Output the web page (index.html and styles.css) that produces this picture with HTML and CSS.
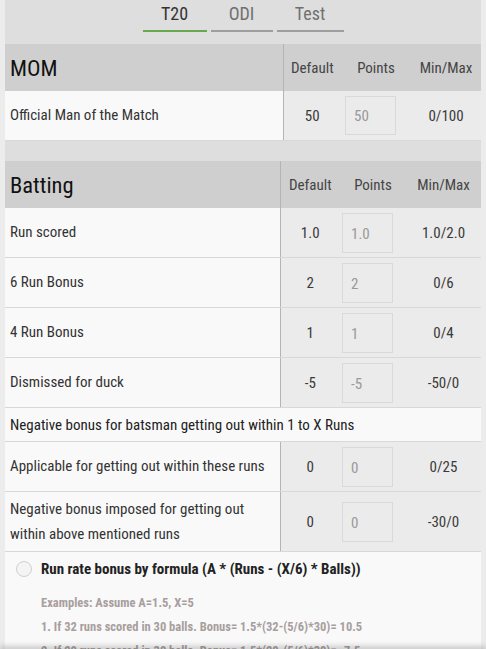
FILE: index.html
```html
<!DOCTYPE html>
<html>
<head>
<meta charset="utf-8">
<link rel="stylesheet" href="styles.css">
</head>
<body>
<div class="page">
  <nav class="tabs">
    <div class="tab tab-active tab-t20">T20</div>
    <div class="tab tab-odi">ODI</div>
    <div class="tab tab-test">Test</div>
  </nav>

  <table class="points mom">
    <colgroup>
      <col class="c1"><col class="c2"><col class="c3"><col class="c4">
    </colgroup>
    <thead>
      <tr class="head">
        <th class="title">MOM</th>
        <th>Default</th>
        <th>Points</th>
        <th>Min/Max</th>
      </tr>
    </thead>
    <tbody>
      <tr>
        <td class="label">Official Man of the Match</td>
        <td class="val">50</td>
        <td class="inp"><div class="box">50</div></td>
        <td class="val">0/100</td>
      </tr>
    </tbody>
  </table>

  <table class="points bat">
    <colgroup>
      <col class="c1"><col class="c2"><col class="c3"><col class="c4">
    </colgroup>
    <thead>
      <tr class="head">
        <th class="title">Batting</th>
        <th>Default</th>
        <th>Points</th>
        <th>Min/Max</th>
      </tr>
    </thead>
    <tbody>
      <tr>
        <td class="label">Run scored</td>
        <td class="val">1.0</td>
        <td class="inp"><div class="box">1.0</div></td>
        <td class="val">1.0/2.0</td>
      </tr>
      <tr>
        <td class="label">6 Run Bonus</td>
        <td class="val">2</td>
        <td class="inp"><div class="box">2</div></td>
        <td class="val">0/6</td>
      </tr>
      <tr>
        <td class="label">4 Run Bonus</td>
        <td class="val">1</td>
        <td class="inp"><div class="box">1</div></td>
        <td class="val">0/4</td>
      </tr>
      <tr>
        <td class="label">Dismissed for duck</td>
        <td class="val">-5</td>
        <td class="inp"><div class="box">-5</div></td>
        <td class="val">-50/0</td>
      </tr>
      <tr class="full">
        <td colspan="4">Negative bonus for batsman getting out within 1 to X Runs</td>
      </tr>
      <tr>
        <td class="label">Applicable for getting out within these runs</td>
        <td class="val">0</td>
        <td class="inp"><div class="box">0</div></td>
        <td class="val">0/25</td>
      </tr>
      <tr class="tall">
        <td class="label">Negative bonus imposed for getting out within above mentioned runs</td>
        <td class="val">0</td>
        <td class="inp"><div class="box">0</div></td>
        <td class="val">-30/0</td>
      </tr>
    </tbody>
  </table>

  <section class="rr">
    <div class="rr-title">
      <span class="radio"></span>
      <span>Run rate bonus by formula (A * (Runs - (X/6) * Balls))</span>
    </div>
    <div class="rr-ex">
      <p>Examples: Assume A=1.5, X=5</p>
      <p>1. If 32 runs scored in 30 balls. Bonus= 1.5*(32-(5/6)*30)= 10.5</p>
      <p>2. If 20 runs scored in 30 balls. Bonus= 1.5*(20-(5/6)*30)= -7.5</p>
    </div>
  </section>
</div>
<div class="bottom-shadow"></div>
</body>
</html>
```

FILE: styles.css
```css
html, body {
  margin: 0;
  padding: 0;
}
body {
  background: #ececec;
  font-family: "Roboto Condensed", Roboto, "Liberation Sans", sans-serif;
  font-stretch: 75%;
  color: #333;
  overflow: hidden;
  height: 649px;
}
.page {
  width: 476px;
  margin: 0 5px;
  background: #dedede;
  min-height: 649px;
}
.tabs {
  display: flex;
  justify-content: center;
  gap: 4px;
  height: 32px;
  margin-bottom: 12px;
}
.tab {
  box-sizing: border-box;
  height: 32px;
  padding-top: 3px;
  text-align: center;
  font-size: 18px;
  color: #707070;
  border-bottom: 2px solid #9e9e9e;
}
.tab-t20 { width: 64px; color: #333; border-bottom-color: #6aa84f; }
.tab-odi { width: 62px; }
.tab-test { width: 67px; }

.points {
  width: 476px;
  border-collapse: collapse;
  table-layout: fixed;
}
.mom .c1 { width: 278px; }
.mom .c2 { width: 58px; }
.mom .c3 { width: 70px; }
.mom .c4 { width: 70px; }
.bat .c1 { width: 275px; }
.bat .c2 { width: 60px; }
.bat .c3 { width: 66px; }
.bat .c4 { width: 75px; }

.head th {
  background: #cfcfcf;
  height: 47px;
  padding: 0;
  font-weight: 400;
  font-size: 15px;
  color: #444;
  text-align: center;
}
.head th.title {
  text-align: left;
  padding-left: 5px;
  font-size: 22.5px;
  color: #111;
  border-right: 1px solid #b4b4b4;
}
.points td {
  padding: 0;
  border-bottom: 1px solid #d8d8d8;
  background: #ebebeb;
  font-size: 15px;
  font-weight: 400;
  color: #333;
}
.points td.label {
  background: #f9f9f9;
  padding-left: 5px;
  border-right: 1px solid #b4b4b4;
  height: 49px;
  line-height: 25px;
}
.points td.val {
  text-align: center;
  color: #3a3a3a;
  font-weight: 400;
}
.points td.inp {
  padding-left: 2px;
}
.mom td.inp { padding-left: 4px; }
.box {
  box-sizing: border-box;
  width: 51px;
  height: 40px;
  border: 1px solid #d9d9d9;
  padding-left: 8px;
  line-height: 40px;
  color: #999;
  font-size: 15px;
}
.mom .box { height: 39px; line-height: 39px; }
.bat { margin-top: 20px; }
.points tr.full td {
  background: #f9f9f9;
  height: 33px;
  padding-left: 5px;
  color: #222;
}
.points tr.tall td.label { height: 59px; }

.rr {
  background: #f9f9f9;
  padding: 8px 0 0 11px;
  height: 120px;
}
.rr-title {
  display: flex;
  align-items: center;
  gap: 9px;
  font-weight: 700;
  font-size: 15px;
  color: #222;
}
.radio {
  box-sizing: border-box;
  width: 16px;
  height: 16px;
  border: 1px solid #cfcfcf;
  border-radius: 50%;
  background: #f4f4f4;
}
.rr-ex {
  padding-left: 25px;
  padding-top: 17px;
}
.rr-ex p {
  margin: 0 0 9px 0;
  font-size: 12.5px;
  font-weight: 700;
  color: #a89e9e;
  line-height: 15px;
}
.bottom-shadow {
  position: fixed;
  left: 0;
  right: 0;
  bottom: -6px;
  height: 6px;
  box-shadow: 0 -2px 6px rgba(0,0,0,0.25);
  background: #f9f9f9;
}
```
